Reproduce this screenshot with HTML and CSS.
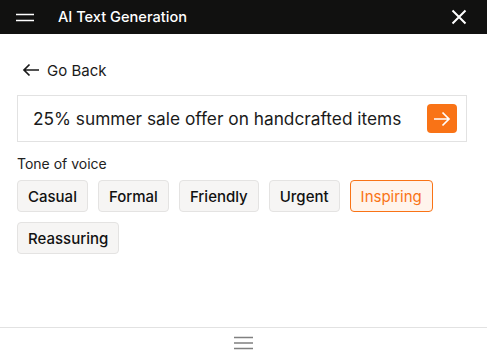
FILE: index.html
```html
<!DOCTYPE html>
<html>
<head>
<meta charset="utf-8">
<link rel="stylesheet" href="styles.css">
</head>
<body>
<div class="app">
  <header class="topbar">
    <div class="menu">
      <svg width="20" height="10" viewBox="0 0 20 10"><path d="M1 2.5H19M1 8.5H19" stroke="#fff" stroke-width="1.6"/></svg>
    </div>
    <div class="title">AI Text Generation</div>
    <div class="close">
      <svg width="16" height="16" viewBox="0 0 16 16"><path d="M1.5 1.5L14.5 14.5M14.5 1.5L1.5 14.5" stroke="#fff" stroke-width="2"/></svg>
    </div>
  </header>
  <main class="main">
    <div class="back">
      <svg width="18" height="14" viewBox="0 0 18 14"><path d="M17 7H2M7.5 1.5L2 7L7.5 12.5" stroke="#1a1a1a" stroke-width="1.7" fill="none"/></svg>
      <span>Go Back</span>
    </div>
    <div class="prompt">
      <span class="prompt-text">25% summer sale offer on handcrafted items</span>
      <button class="send">
        <svg width="18" height="16" viewBox="0 0 18 16"><path d="M1 8H16M9.5 1.5L16 8L9.5 14.5" stroke="#fff" stroke-width="1.7" fill="none"/></svg>
      </button>
    </div>
    <div class="label">Tone of voice</div>
    <div class="chips">
      <span class="chip">Casual</span>
      <span class="chip">Formal</span>
      <span class="chip">Friendly</span>
      <span class="chip">Urgent</span>
      <span class="chip active">Inspiring</span>
      <span class="chip">Reassuring</span>
    </div>
  </main>
  <footer class="footer">
    <svg width="19" height="14" viewBox="0 0 19 14"><path d="M0 1.5H19M0 7H19M0 12.5H19" stroke="#808080" stroke-width="1.5"/></svg>
  </footer>
</div>
</body>
</html>
```
FILE: styles.css
```css
* { box-sizing: border-box; }
html, body { margin: 0; padding: 0; }
body {
  font-family: Inter, "Liberation Sans", sans-serif;
  color: #111;
  background: #fff;
}
.app {
  width: 487px;
  height: 358px;
  display: flex;
  flex-direction: column;
  overflow: hidden;
}
.topbar {
  height: 34px;
  background: #111110;
  display: flex;
  align-items: center;
  padding: 0 20px 0 15px;
  color: #fff;
}
.menu { display: flex; width: 20px; height: 10px; margin-top: -1px; }
.title {
  margin-left: 23px;
  font-size: 14.6px;
  font-weight: 500;
  flex: 1;
}
.close { display: flex; }
.main {
  flex: 1;
  padding: 26px 20px 0 17px;
}
.back {
  display: flex;
  align-items: center;
  gap: 7px;
  padding-left: 5px;
  font-size: 15px;
  color: #1a1a1a;
  height: 20px;
}
.prompt {
  margin-top: 15px;
  height: 47px;
  border: 1px solid #e2e2e2;
  display: flex;
  align-items: center;
  padding: 0 9px 0 15px;
}
.prompt-text {
  flex: 1;
  font-size: 17.3px;
  color: #1a1a1a;
}
.send {
  width: 30px;
  height: 29px;
  border: none;
  border-radius: 4px;
  background: #f97316;
  display: flex;
  align-items: center;
  justify-content: center;
  padding: 0;
}
.label {
  margin-top: 13px;
  font-size: 14px;
  color: #222;
}
.chips {
  margin-top: 8px;
  display: flex;
  flex-wrap: wrap;
  gap: 10px;
  width: 430px;
}
.chip {
  height: 32px;
  display: flex;
  align-items: center;
  padding: 0 10px;
  font-size: 15px;
  font-weight: 500;
  background: #f6f5f4;
  border: 1px solid #e4e3e2;
  border-radius: 4px;
  color: #111;
}
.chip.active {
  background: #fff4ec;
  border-color: #f97316;
  color: #f97316;
  font-weight: 400;
}
.footer {
  height: 31px;
  border-top: 1px solid #e2e2e2;
  display: flex;
  justify-content: center;
  align-items: center;
}
```
